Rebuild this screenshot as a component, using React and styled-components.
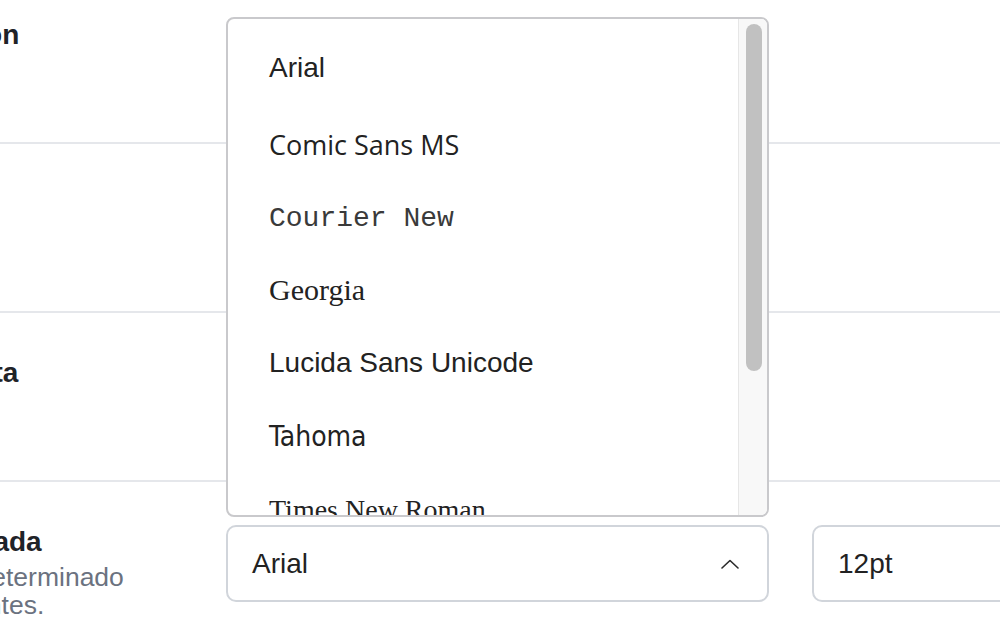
import React from 'react';
import styled, { createGlobalStyle } from 'styled-components';

const GlobalStyle = createGlobalStyle`
  html, body {
    margin: 0;
    padding: 0;
    background: #ffffff;
    overflow: hidden;
  }
  body {
    font-family: "Liberation Sans", Arial, sans-serif;
    color: #1f2328;
  }
`;

const Page = styled.div`
  margin: -25px 0 0 -268px;
  width: 1300px;
`;

const Row = styled.section`
  display: grid;
  grid-template-columns: 446px 1fr;
  column-gap: 48px;
  padding: 43px 0 47px;
  border-bottom: 2px solid #e5e7eb;
`;

const LabelBlock = styled.div`
  display: flex;
  flex-direction: column;
  gap: 4px;
`;

const LabelTitle = styled.h3`
  margin: 0;
  font-size: 28px;
  line-height: 34px;
  font-weight: 700;
  color: #1f2328;
`;

const LabelHint = styled.p`
  margin: 0;
  max-width: 400px;
  font-size: 26.5px;
  line-height: 28px;
  color: #6b7280;
`;

const Controls = styled.div`
  display: grid;
  grid-template-columns: 543px 200px;
  column-gap: 43px;
  align-items: start;
`;

const FieldWrap = styled.div`
  position: relative;
`;

const SelectBox = styled.div`
  box-sizing: border-box;
  height: 77px;
  display: flex;
  align-items: center;
  justify-content: space-between;
  padding: 0 28px 0 24px;
  border: 2px solid #d1d5db;
  border-radius: 10px;
  background: #ffffff;
  font-size: 28px;
  color: #222222;
`;

const SizeBox = styled(SelectBox)`
  justify-content: flex-start;
`;

const Dropdown = styled.div`
  position: absolute;
  left: 0;
  right: 0;
  bottom: calc(100% + 8px);
  height: 500px;
  box-sizing: border-box;
  display: flex;
  border: 2px solid #c9c9cc;
  border-radius: 8px;
  background: #ffffff;
  overflow: hidden;
  z-index: 5;
`;

const OptionList = styled.ul`
  flex: 1;
  list-style: none;
  margin: 0;
  padding: 11px 0 0;
  overflow: hidden;
`;

const OptionItem = styled.li`
  height: ${(p) => p.$h || 73}px;
  display: flex;
  align-items: center;
  padding-left: 41px;
  font-family: ${(p) => p.$family};
  font-size: ${(p) => p.$size || 28}px;
  font-weight: ${(p) => p.$weight || 400};
  color: ${(p) => p.$color || '#222222'};
  white-space: nowrap;
`;

const ScrollRail = styled.div`
  width: 29px;
  box-sizing: border-box;
  padding: 5px 5px 0 7px;
  border-left: 1px solid #e6e6e6;
  background: #f8f8f8;
`;

const ScrollThumb = styled.div`
  height: 347px;
  border-radius: 8px;
  background: #c1c1c1;
`;

const Chevron = ({ up }) => (
  <svg width="18" height="10" viewBox="0 0 18 10" fill="none">
    <polyline
      points={up ? '1,9 9,1.5 17,9' : '1,1 9,8.5 17,1'}
      stroke="#2b2b2b"
      strokeWidth="1.6"
      strokeLinecap="round"
      strokeLinejoin="round"
    />
  </svg>
);

const fonts = [
  { name: 'Arial', family: '"Liberation Sans", Arial, sans-serif', h: 76 },
  { name: 'Comic Sans MS', family: '"Comic Sans MS", "Open Sans", sans-serif', h: 77, size: 27, weight: 500 },
  { name: 'Courier New', family: '"Liberation Mono", "Courier New", monospace', h: 71, color: '#3a3a3a' },
  { name: 'Georgia', family: '"Liberation Serif", Georgia, serif', h: 72, size: 30 },
  { name: 'Lucida Sans Unicode', family: '"Liberation Sans", sans-serif', h: 73 },
  { name: 'Tahoma', family: '"DejaVu Sans Condensed", "DejaVu Sans", sans-serif', h: 74 },
  { name: 'Times New Roman', family: '"Liberation Serif", "Times New Roman", serif', h: 73 },
  { name: 'Trebuchet MS', family: '"DejaVu Sans", sans-serif', h: 73 },
  { name: 'Verdana', family: '"DejaVu Sans", Verdana, sans-serif', h: 73 },
];

const settings = [
  { title: 'Tipografías de Notion', value: 'Sistema' },
  { title: 'Tamaño de fuente', value: 'Mediano' },
  { title: 'Fuente de la consulta', value: 'Inter' },
];

const FontMenu = () => (
  <Dropdown>
    <OptionList>
      {fonts.map((f) => (
        <OptionItem
          key={f.name}
          $family={f.family}
          $h={f.h}
          $size={f.size}
          $weight={f.weight}
          $color={f.color}
        >
          {f.name}
        </OptionItem>
      ))}
    </OptionList>
    <ScrollRail>
      <ScrollThumb />
    </ScrollRail>
  </Dropdown>
);

const App = () => (
  <>
    <GlobalStyle />
    <Page>
      {settings.map((s) => (
        <Row key={s.title}>
          <LabelBlock>
            <LabelTitle>{s.title}</LabelTitle>
          </LabelBlock>
          <Controls>
            <SelectBox>
              {s.value}
              <Chevron />
            </SelectBox>
          </Controls>
        </Row>
      ))}
      <Row>
        <LabelBlock>
          <LabelTitle>Fuente predeterminada</LabelTitle>
          <LabelHint>Fuente y tamaño predeterminado en documentos presentes.</LabelHint>
        </LabelBlock>
        <Controls>
          <FieldWrap>
            <FontMenu />
            <SelectBox>
              Arial
              <Chevron up />
            </SelectBox>
          </FieldWrap>
          <SizeBox>12pt</SizeBox>
        </Controls>
      </Row>
    </Page>
  </>
);

export default App;
